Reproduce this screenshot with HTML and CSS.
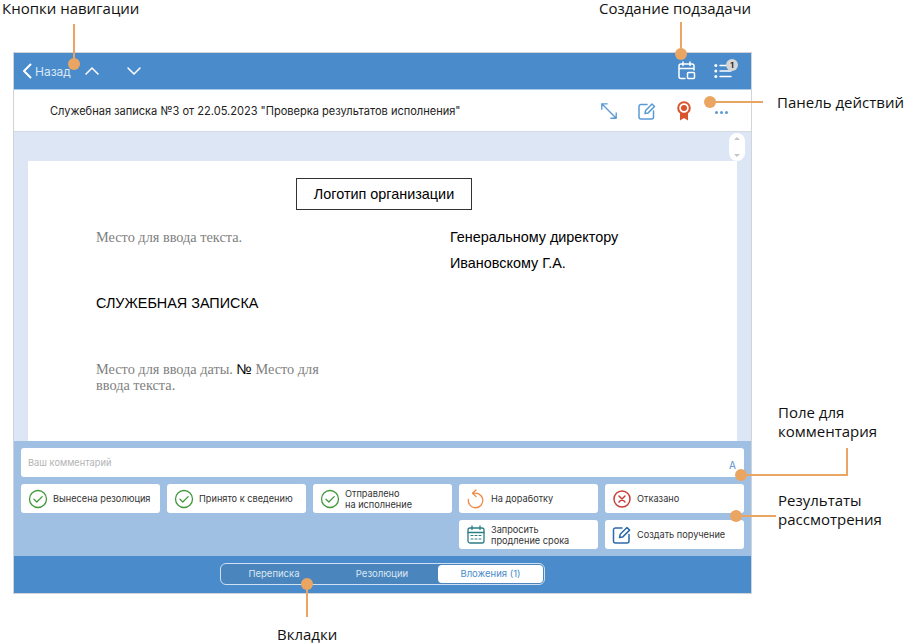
FILE: index.html
```html
<!DOCTYPE html>
<html>
<head>
  <title>Служебная записка</title>
  <link rel="stylesheet" href="styles.css">
</head>
<body>

  <div class="stage">
    <div class="app">

      <!-- Top bar -->
      <div class="topbar">
        <svg class="back-icon" width="12" height="16" viewBox="0 0 12 16"><path d="M9.500 1.500 3 8l6.500 6.500"/></svg>
        <span class="back-text">Назад</span>
        <svg class="nav-up" width="16" height="10" viewBox="0 0 16 10"><path d="M2 8l6-6 6 6"/></svg>
        <svg class="nav-down" width="16" height="10" viewBox="0 0 16 10"><path d="M2 2l6 6 6-6"/></svg>
        <svg class="calendar-icon" width="18" height="20" viewBox="0 0 18 20">
          <path d="M7 17.500H3a2 2 0 0 1-2-2V5a2 2 0 0 1 2-2h11a2 2 0 0 1 2 2v4M1 7.500h15M5 1v3.500M12 1v3.500"/>
          <rect x="9.500" y="11.500" width="7" height="6" rx="1"/>
        </svg>
        <span class="tasks-icon">
          <svg width="18" height="16" viewBox="0 0 18 16">
            <path d="M6 2.500h11M6 8h11M6 13.500h11"/>
            <circle class="dot" cx="1.800" cy="2.500" r="1.500"/>
            <circle class="dot" cx="1.800" cy="8" r="1.500"/>
            <circle class="dot" cx="1.800" cy="13.500" r="1.500"/>
          </svg>
          <span class="badge">1</span>
        </span>
      </div>

      <!-- Title and actions -->
      <div class="titlebar">
        <span class="doc-title">Служебная записка №3 от 22.05.2023 "Проверка результатов исполнения"</span>
        <svg class="act-expand" width="18" height="18" viewBox="0 0 20 20"><path d="M2 2l16 16M2 8V2h6M18 12v6h-6"/></svg>
        <svg class="act-edit" width="18" height="18" viewBox="0 0 18 18"><path d="M9 2.500H3a2 2 0 0 0-2 2V15a2 2 0 0 0 2 2h10.500a2 2 0 0 0 2-2V9M7 11.500l.6-3L14 2l2.500 2.500-6.400 6.400z"/></svg>
        <svg class="act-award" width="14" height="20" viewBox="0 0 14 20">
          <path class="ribbon" d="M3 12v7.500l4-2.500 4 2.500V12z"/>
          <circle class="medal" cx="7" cy="7" r="5.800"/>
          <circle class="medal-core" cx="7" cy="7" r="3"/>
        </svg>
        <span class="act-more"><i></i><i></i><i></i></span>
      </div>

      <!-- Document -->
      <div class="viewer">
        <div class="doc">
          <div class="logo-box">Логотип организации</div>
          <div class="doc-head">
            <div class="placeholder">Место для ввода текста.</div>
            <div class="addressee">
              <div>Генеральному директору</div>
              <div>Ивановскому Г.А.</div>
            </div>
          </div>
          <div class="doc-type">СЛУЖЕБНАЯ ЗАПИСКА</div>
          <div class="doc-date placeholder">Место для ввода даты. <span class="num">№</span> Место для ввода текста.</div>
        </div>
      </div>

      <!-- Comment and results -->
      <div class="panel">
        <div class="comment">
          <span>Ваш комментарий</span>
          <span class="font-a">A</span>
        </div>
        <div class="results">
          <div class="result">
            <svg width="20" height="20" viewBox="0 0 20 20"><circle class="green" cx="10" cy="10" r="8.500"/><path class="green" d="M6 10.300l2.800 2.700L14.200 7.600"/></svg>
            <span>Вынесена резолюция</span>
          </div>
          <div class="result">
            <svg width="20" height="20" viewBox="0 0 20 20"><circle class="green" cx="10" cy="10" r="8.500"/><path class="green" d="M6 10.300l2.800 2.700L14.200 7.600"/></svg>
            <span>Принято к сведению</span>
          </div>
          <div class="result">
            <svg width="20" height="20" viewBox="0 0 20 20"><circle class="green" cx="10" cy="10" r="8.500"/><path class="green" d="M6 10.300l2.800 2.700L14.200 7.600"/></svg>
            <span>Отправлено<br>на исполнение</span>
          </div>
          <div class="result">
            <svg width="20" height="20" viewBox="0 0 20 20"><path class="orange" d="M7 4.600A7.300 7.300 0 1 1 2.300 10.500M6.500 4.200L10 1M6.500 4.200L10 7.500"/></svg>
            <span>На доработку</span>
          </div>
          <div class="result">
            <svg width="20" height="20" viewBox="0 0 20 20"><circle class="red" cx="10" cy="10" r="8"/><path class="red" d="M7 7l6 6M13 7l-6 6"/></svg>
            <span>Отказано</span>
          </div>
          <div class="result col-4">
            <svg width="20" height="20" viewBox="0 0 20 20">
              <rect class="teal" x="2" y="3" width="16" height="15" rx="2"/>
              <path class="teal" d="M2 7.500h16M6 1v3.500M14 1v3.500"/>
              <path class="teal-thin" d="M5 10.500h2M9 10.500h2M13 10.500h2M5 14h2M9 14h2M13 14h2"/>
            </svg>
            <span>Запросить<br>продление срока</span>
          </div>
          <div class="result">
            <svg width="20" height="20" viewBox="0 0 20 20"><path class="blue" d="M10 3H3.500a2 2 0 0 0-2 2v11a2 2 0 0 0 2 2H15a2 2 0 0 0 2-2V9.500"/><path class="blue" d="M7.500 12.500l.7-3.200L15 2.500l2.600 2.600-6.800 6.800z"/></svg>
            <span>Создать поручение</span>
          </div>
        </div>
      </div>

      <!-- Tabs -->
      <div class="tabbar">
        <div class="tabs">
          <div class="tab">Переписка</div>
          <div class="tab">Резолюции</div>
          <div class="tab active">Вложения (1)</div>
        </div>
      </div>
    </div>

    <div class="scroll-pill"><i class="arrow-up"></i><i class="arrow-down"></i></div>

    <!-- Callouts -->
    <div class="label label-nav">Кнопки навигации</div>
    <div class="label label-sub">Создание подзадачи</div>
    <div class="label label-act">Панель действий</div>
    <div class="label label-com">Поле для<br>комментария</div>
    <div class="label label-res">Результаты<br>рассмотрения</div>
    <div class="label label-tab">Вкладки</div>

    <div class="line v line-nav"></div>
    <div class="line v line-sub"></div>
    <div class="line h line-act"></div>
    <div class="line h line-com"></div>
    <div class="line v line-com2"></div>
    <div class="line h line-res"></div>
    <div class="line v line-tab"></div>

    <div class="dot-mark dot-nav"></div>
    <div class="dot-mark dot-sub"></div>
    <div class="dot-mark dot-act"></div>
    <div class="dot-mark dot-com"></div>
    <div class="dot-mark dot-res"></div>
    <div class="dot-mark dot-tab"></div>
  </div>

</body>
</html>
```

FILE: styles.css
```css
html, body {
  margin: 0;
  padding: 0;
  background: #fff;
}

.stage {
  position: relative;
  width: 906px;
  height: 644px;
  overflow: hidden;
  padding: 52px 0 0 13px;
  box-sizing: border-box;
  font-family: Inter, "Noto Sans", sans-serif;
}

.app {
  width: 739px;
  height: 542px;
  box-sizing: border-box;
  border: 1px solid #d0d3d8;
  display: flex;
  flex-direction: column;
}

/* Top bar */
.topbar {
  height: 36px;
  flex: none;
  background: #4a8bcb;
  display: flex;
  align-items: center;
  color: #fff;
  border-bottom: 1px solid #a9cbe9;
  padding-left: 7px;
}

.topbar svg path,
.topbar svg rect {
  fill: none;
  stroke: #fff;
  stroke-width: 1.500;
  stroke-linecap: round;
  stroke-linejoin: round;
}

.topbar .back-icon path {
  stroke-width: 2;
}

.topbar .dot {
  fill: #fff;
}

.back-text {
  font-size: 12px;
  margin-left: 2px;
  color: #d9e7f5;
}

.nav-up {
  margin-left: 13px;
}

.nav-down {
  margin-left: 26px;
}

.calendar-icon {
  margin-left: auto;
}

.tasks-icon {
  position: relative;
  margin-left: 18px;
  margin-right: 19px;
  display: flex;
}

.badge {
  position: absolute;
  top: -4px;
  right: -6px;
  width: 12px;
  height: 12px;
  border-radius: 50%;
  background: #d6d6d6;
  color: #222;
  font-size: 8px;
  font-weight: 700;
  line-height: 12px;
  text-align: center;
}

/* Title bar */
.titlebar {
  height: 41px;
  flex: none;
  background: #fff;
  display: flex;
  align-items: center;
  border-bottom: 1px solid #d5d9e2;
  padding-left: 36px;
}

.doc-title {
  font-size: 11.050px;
  color: #222;
  margin-right: auto;
}

.titlebar svg path {
  fill: none;
  stroke: #5b9bd5;
  stroke-width: 1.500;
  stroke-linecap: round;
  stroke-linejoin: round;
}

.act-edit {
  margin-left: 20px;
}

.titlebar .act-award {
  margin-left: 21px;
}

.titlebar .act-award .ribbon {
  fill: #d9532c;
  stroke: none;
}

.medal {
  fill: #fff;
  stroke: #d9532c;
  stroke-width: 2;
}

.medal-core {
  fill: #d9532c;
}

.act-more {
  display: flex;
  gap: 2px;
  margin: 4px 23px 0 24px;
}

.act-more i {
  width: 3px;
  height: 3px;
  border-radius: 50%;
  background: #5b9bd5;
}

/* Document */
.viewer {
  flex: 1;
  min-height: 0;
  background: #dde6f5;
  padding: 29px 14px 0;
  display: flex;
}

.doc {
  flex: 1;
  background: #fff;
  overflow: hidden;
  padding: 17px 68px 0;
  font-family: "Liberation Sans", Arial, sans-serif;
  font-size: 14.400px;
  color: #000;
}

.logo-box {
  width: 176px;
  height: 32px;
  box-sizing: border-box;
  border: 1.500px solid #333;
  margin-left: 200px;
  line-height: 30px;
  text-align: center;
}

.doc-head {
  display: grid;
  grid-template-columns: 354px 1fr;
  margin-top: 19px;
}

.placeholder {
  font-family: "Liberation Serif", "Times New Roman", serif;
  color: #808080;
  font-size: 14.300px;
}

.addressee div {
  margin-bottom: 10px;
  line-height: 16px;
}

.doc-type {
  margin-top: 14px;
  line-height: 16px;
}

.doc-date {
  margin-top: 50px;
  width: 240px;
  line-height: 16px;
}

.num {
  font-family: "Liberation Sans", Arial, sans-serif;
  color: #000;
}

/* Comment and results */
.panel {
  height: 115px;
  flex: none;
  box-sizing: border-box;
  background: #9fc0e2;
  padding: 7px;
}

.comment {
  height: 29px;
  background: #fff;
  border-radius: 3px;
  font-size: 9.300px;
  color: #b4b4b4;
  display: flex;
  justify-content: space-between;
  align-items: center;
  padding: 0 8px 0 7px;
  margin-bottom: 7px;
}

.font-a {
  font-size: 10px;
  color: #5b8fcf;
  align-self: flex-end;
  margin-bottom: 6px;
}

.results {
  display: grid;
  grid-template-columns: repeat(5, 139px);
  grid-auto-rows: 29px;
  gap: 7px;
}

.result {
  background: #fff;
  border-radius: 3px;
  display: flex;
  align-items: center;
  gap: 5px;
  padding-left: 7px;
  font-size: 9.200px;
  line-height: 11px;
  color: #333;
}

.result svg {
  flex: none;
}

.col-4 {
  grid-column: 4;
}

.result svg circle,
.result svg path,
.result svg rect {
  fill: none;
  stroke-width: 1.300;
  stroke-linecap: round;
  stroke-linejoin: round;
}

.result .green { stroke: #43983f; }
.result .orange { stroke: #f08a48; }
.result .red { stroke: #c9403a; stroke-width: 1.500; }
.result .teal { stroke: #2b7d83; }
.result .teal-thin { stroke: #2b7d83; stroke-width: 1; }
.result .blue { stroke: #2f6aa8; stroke-width: 1.500; }

/* Tabs */
.tabbar {
  height: 37px;
  flex: none;
  background: #4a8bcb;
  display: flex;
  justify-content: center;
  padding-top: 7px;
  box-sizing: border-box;
}

.tabs {
  width: 325px;
  height: 22px;
  box-sizing: border-box;
  border: 1px solid #cfe0f1;
  border-radius: 6px;
  background: #4a85bd;
  display: grid;
  grid-template-columns: 104px 112px 1fr;
  padding: 1px;
}

.tab {
  font-size: 9.500px;
  line-height: 18px;
  text-align: center;
  color: #dbe7f3;
}

.tab.active {
  background: #fff;
  color: #4a8bcb;
  border-radius: 4px;
}

/* Scroll control */
.scroll-pill {
  position: absolute;
  left: 729px;
  top: 133px;
  width: 16px;
  height: 28px;
  background: #fff;
  border-radius: 8px;
}

.arrow-up,
.arrow-down {
  position: absolute;
  left: 5px;
  width: 0;
  height: 0;
  border-left: 3px solid transparent;
  border-right: 3px solid transparent;
}

.arrow-up {
  top: 4px;
  border-bottom: 3px solid #c6c6c6;
}

.arrow-down {
  bottom: 4px;
  border-top: 3px solid #c6c6c6;
}

/* Callouts */
.label {
  position: absolute;
  font-family: "Open Sans", "Noto Sans", sans-serif;
  font-size: 15px;
  line-height: 19px;
  color: #111;
  white-space: nowrap;
}

.label-nav { left: 2px; top: 0; line-height: 17px; }
.label-sub { left: 599px; top: 0; line-height: 17px; }
.label-act { left: 777px; top: 93px; }
.label-com { left: 778px; top: 403px; }
.label-res { left: 778px; top: 491px; }
.label-tab { left: 277px; top: 625px; }

.line {
  position: absolute;
  background: #eba563;
}

.line.v { width: 2px; }
.line.h { height: 2px; }

.line-nav { left: 73px; top: 24px; height: 38px; }
.line-sub { left: 680px; top: 22px; height: 32px; }
.line-act { left: 710px; top: 101px; width: 53px; }
.line-com { left: 741px; top: 474px; width: 107px; }
.line-com2 { left: 846px; top: 448px; height: 28px; }
.line-res { left: 736px; top: 515px; width: 40px; }
.line-tab { left: 306px; top: 584px; height: 33px; }

.dot-mark {
  position: absolute;
  width: 12px;
  height: 12px;
  border-radius: 50%;
  background: #eba563;
}

.dot-nav { left: 68px; top: 58px; }
.dot-sub { left: 675px; top: 48px; }
.dot-act { left: 704px; top: 96px; }
.dot-com { left: 735px; top: 469px; }
.dot-res { left: 730px; top: 510px; }
.dot-tab { left: 301px; top: 578px; }
```
